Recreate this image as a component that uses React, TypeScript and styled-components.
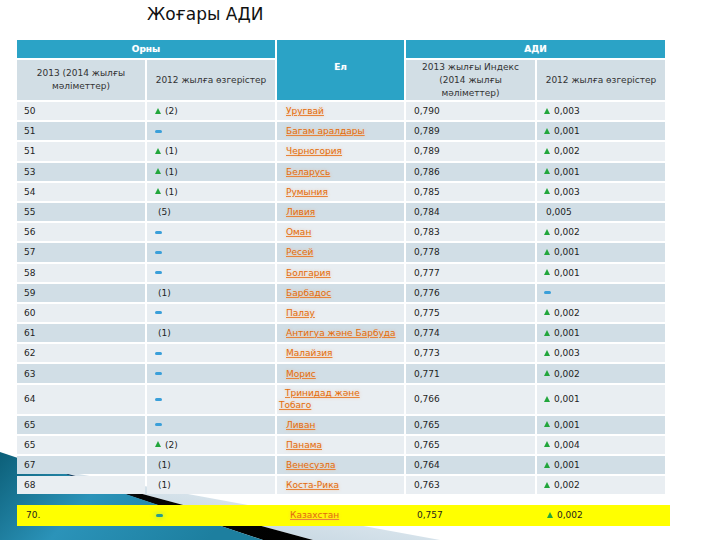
import React from "react";
import styled, { createGlobalStyle } from "styled-components";

const Global = createGlobalStyle`
  html, body { margin: 0; padding: 0; background: #ffffff; }
  body { font-family: "DejaVu Sans", "Noto Sans", sans-serif; color: #1e1e1e; }
`;

const Page = styled.div`
  position: relative;
  width: 720px;
  height: 540px;
  overflow: hidden;
  background: #ffffff;
`;

const Decor = styled.svg`
  position: absolute;
  left: 0;
  top: 0;
  width: 720px;
  height: 540px;
  z-index: 0;
  pointer-events: none;
`;

const Content = styled.div`
  position: relative;
  z-index: 1;
  display: flex;
  flex-direction: column;
`;

const Title = styled.h1`
  margin: 0;
  height: 40px;
  padding-left: 147px;
  font-size: 17px;
  line-height: 28px;
  font-weight: normal;
  color: #111;
  font-family: "DejaVu Sans", sans-serif;
`;

const Grid = styled.div`
  margin-left: 17px;
  display: grid;
  grid-template-columns: 128px 128px 127px 129px 128px;
  column-gap: 2px;
  row-gap: 2px;
  width: 648px;
`;

const Head = styled.div<{ $span?: number; $rows?: number }>`
  grid-column: span ${(p) => p.$span ?? 1};
  grid-row: span ${(p) => p.$rows ?? 1};
  background: #2ba3c6;
  color: #ffffff;
  font-weight: bold;
  font-size: 9px;
  display: flex;
  align-items: center;
  justify-content: center;
  height: ${(p) => (p.$rows === 2 ? "auto" : "18px")};
  padding-bottom: ${(p) => (p.$rows === 2 ? "6px" : "0")};
  text-shadow: 0 0 1px rgba(255, 255, 255, 0.4);
`;

const SubHead = styled.div`
  background: #d2dee5;
  color: #333;
  font-size: 9px;
  line-height: 13px;
  height: 40px;
  display: flex;
  align-items: center;
  justify-content: center;
  text-align: center;
`;

const Cell = styled.div<{ $alt: boolean; $pad: number; $tall?: boolean }>`
  background: ${(p) => (p.$alt ? "#d1dee6" : "#e9eef2")};
  height: ${(p) => (p.$tall ? "29px" : "18.2px")};
  padding-left: ${(p) => p.$pad}px;
  display: flex;
  align-items: center;
  font-size: 9px;
  color: #1e1e1e;
  white-space: nowrap;
`;

const Link = styled.span<{ $wrap?: boolean }>`
  color: #e36c0a;
  text-decoration: underline;
  text-decoration-color: #e8843a;
  text-shadow: 0 0 3px rgba(245, 170, 110, 0.55);
  white-space: ${(p) => (p.$wrap ? "normal" : "nowrap")};
  line-height: 12px;
`;

const TwoLine = styled.span`
  display: block;
  width: 100px;
  margin-left: -4px;
  text-indent: 6px;
  white-space: normal;
`;

const Up = styled.span`
  display: inline-block;
  width: 0;
  height: 0;
  border-left: 3px solid transparent;
  border-right: 3px solid transparent;
  border-bottom: 6px solid #22a63c;
  margin-right: 4px;
  margin-top: -1px;
`;

const Dash = styled.span<{ $green?: boolean }>`
  display: inline-block;
  width: 7px;
  height: 3px;
  border-radius: 2px;
  background: ${(p) => (p.$green ? "#2a9c8c" : "#3a9fd9")};
  box-shadow: ${(p) => (p.$green ? "0 0 4px 2px rgba(140, 220, 120, 0.35)" : "none")};
`;

const Indent = styled.span<{ $w: number }>`
  display: inline-block;
  width: ${(p) => p.$w}px;
`;

const Highlight = styled.div`
  margin-top: 10.4px;
  margin-left: 17px;
  width: 653px;
  height: 21px;
  background: #ffff00;
  display: grid;
  grid-template-columns: 130px 130px 128px 130px 135px;
`;

const HCell = styled.div<{ $pad: number }>`
  padding-left: ${(p) => p.$pad}px;
  display: flex;
  align-items: center;
  font-size: 9px;
  color: #1e1e1e;
  white-space: nowrap;
`;

type Change = { kind: "up" | "dash" | "none"; text?: string };

type Row = {
  rank: string;
  rankChange: Change;
  country: string;
  index: string;
  indexChange: Change;
  tall?: boolean;
};

const rows: Row[] = [
  { rank: "50", rankChange: { kind: "up", text: "(2)" }, country: "Уругвай", index: "0,790", indexChange: { kind: "up", text: "0,003" } },
  { rank: "51", rankChange: { kind: "dash" }, country: "Багам аралдары", index: "0,789", indexChange: { kind: "up", text: "0,001" } },
  { rank: "51", rankChange: { kind: "up", text: "(1)" }, country: "Черногория", index: "0,789", indexChange: { kind: "up", text: "0,002" } },
  { rank: "53", rankChange: { kind: "up", text: "(1)" }, country: "Беларусь", index: "0,786", indexChange: { kind: "up", text: "0,001" } },
  { rank: "54", rankChange: { kind: "up", text: "(1)" }, country: "Румыния", index: "0,785", indexChange: { kind: "up", text: "0,003" } },
  { rank: "55", rankChange: { kind: "none", text: "(5)" }, country: "Ливия", index: "0,784", indexChange: { kind: "none", text: "0,005" } },
  { rank: "56", rankChange: { kind: "dash" }, country: "Оман", index: "0,783", indexChange: { kind: "up", text: "0,002" } },
  { rank: "57", rankChange: { kind: "dash" }, country: "Ресей", index: "0,778", indexChange: { kind: "up", text: "0,001" } },
  { rank: "58", rankChange: { kind: "dash" }, country: "Болгария", index: "0,777", indexChange: { kind: "up", text: "0,001" } },
  { rank: "59", rankChange: { kind: "none", text: "(1)" }, country: "Барбадос", index: "0,776", indexChange: { kind: "dash" } },
  { rank: "60", rankChange: { kind: "dash" }, country: "Палау", index: "0,775", indexChange: { kind: "up", text: "0,002" } },
  { rank: "61", rankChange: { kind: "none", text: "(1)" }, country: "Антигуа және Барбуда", index: "0,774", indexChange: { kind: "up", text: "0,001" } },
  { rank: "62", rankChange: { kind: "dash" }, country: "Малайзия", index: "0,773", indexChange: { kind: "up", text: "0,003" } },
  { rank: "63", rankChange: { kind: "dash" }, country: "Морис", index: "0,771", indexChange: { kind: "up", text: "0,002" } },
  { rank: "64", rankChange: { kind: "dash" }, country: "Тринидад және Тобаго", index: "0,766", indexChange: { kind: "up", text: "0,001" }, tall: true },
  { rank: "65", rankChange: { kind: "dash" }, country: "Ливан", index: "0,765", indexChange: { kind: "up", text: "0,001" } },
  { rank: "65", rankChange: { kind: "up", text: "(2)" }, country: "Панама", index: "0,765", indexChange: { kind: "up", text: "0,004" } },
  { rank: "67", rankChange: { kind: "none", text: "(1)" }, country: "Венесуэла", index: "0,764", indexChange: { kind: "up", text: "0,001" } },
  { rank: "68", rankChange: { kind: "none", text: "(1)" }, country: "Коста-Рика", index: "0,763", indexChange: { kind: "up", text: "0,002" } },
];

function ChangeView({ c, noneIndent }: { c: Change; noneIndent: number }) {
  if (c.kind === "dash") return <Dash />;
  if (c.kind === "up")
    return (
      <>
        <Up />
        {c.text}
      </>
    );
  return (
    <>
      <Indent $w={noneIndent} />
      {c.text}
    </>
  );
}

export default function App() {
  return (
    <>
      <Global />
      <Page>
        <Decor viewBox="0 0 720 540">
          <defs>
            <linearGradient id="teal" x1="0" y1="0" x2="1" y2="0.3">
              <stop offset="0" stopColor="#0c5f78" />
              <stop offset="0.45" stopColor="#2b93b9" />
              <stop offset="1" stopColor="#1d7f9f" />
            </linearGradient>
            <linearGradient id="black" x1="0" y1="0" x2="1" y2="0">
              <stop offset="0" stopColor="#1d4d7a" />
              <stop offset="0.35" stopColor="#050505" />
              <stop offset="1" stopColor="#000000" />
            </linearGradient>
            <linearGradient id="light" x1="0" y1="1" x2="1" y2="0">
              <stop offset="0" stopColor="#b5cad8" />
              <stop offset="0.6" stopColor="#dce7ee" />
              <stop offset="1" stopColor="#ffffff" />
            </linearGradient>
          </defs>
          <polygon points="46,468 440,540 313,540" fill="url(#light)" />
          <polygon points="46,468 313,540 263,540" fill="url(#black)" />
          <polygon points="0,452 263,540 0,540" fill="url(#teal)" />
        </Decor>
        <Content>
          <Title>Жоғары АДИ</Title>
          <Grid>
            <Head $span={2}>Орны</Head>
            <Head $rows={2}>Ел</Head>
            <Head $span={2}>АДИ</Head>
            <SubHead>
              2013 (2014 жылғы
              <br />
              мәліметтер)
            </SubHead>
            <SubHead>2012 жылға өзгерістер</SubHead>
            <SubHead>
              2013 жылғы Индекс
              <br />
              (2014 жылғы
              <br />
              мәліметтер)
            </SubHead>
            <SubHead>2012 жылға өзгерістер</SubHead>
            {rows.map((r, i) => {
              const alt = i % 2 === 1;
              return (
                <React.Fragment key={i}>
                  <Cell $alt={alt} $pad={7} $tall={r.tall}>
                    {r.rank}
                  </Cell>
                  <Cell $alt={alt} $pad={8} $tall={r.tall}>
                    <ChangeView c={r.rankChange} noneIndent={3} />
                  </Cell>
                  <Cell $alt={alt} $pad={r.tall ? 6 : 9} $tall={r.tall}>
                    {r.tall ? (
                      <TwoLine>
                        <Link $wrap>{r.country}</Link>
                      </TwoLine>
                    ) : (
                      <Link>{r.country}</Link>
                    )}
                  </Cell>
                  <Cell $alt={alt} $pad={8} $tall={r.tall}>
                    {r.index}
                  </Cell>
                  <Cell $alt={alt} $pad={7} $tall={r.tall}>
                    <ChangeView c={r.indexChange} noneIndent={2} />
                  </Cell>
                </React.Fragment>
              );
            })}
          </Grid>
          <Highlight>
            <HCell $pad={9}>70.</HCell>
            <HCell $pad={9}>
              <Dash $green />
            </HCell>
            <HCell $pad={13}>
              <Link>Казахстан</Link>
            </HCell>
            <HCell $pad={12}>0,757</HCell>
            <HCell $pad={12}>
              <Up />
              0,002
            </HCell>
          </Highlight>
        </Content>
      </Page>
    </>
  );
}
